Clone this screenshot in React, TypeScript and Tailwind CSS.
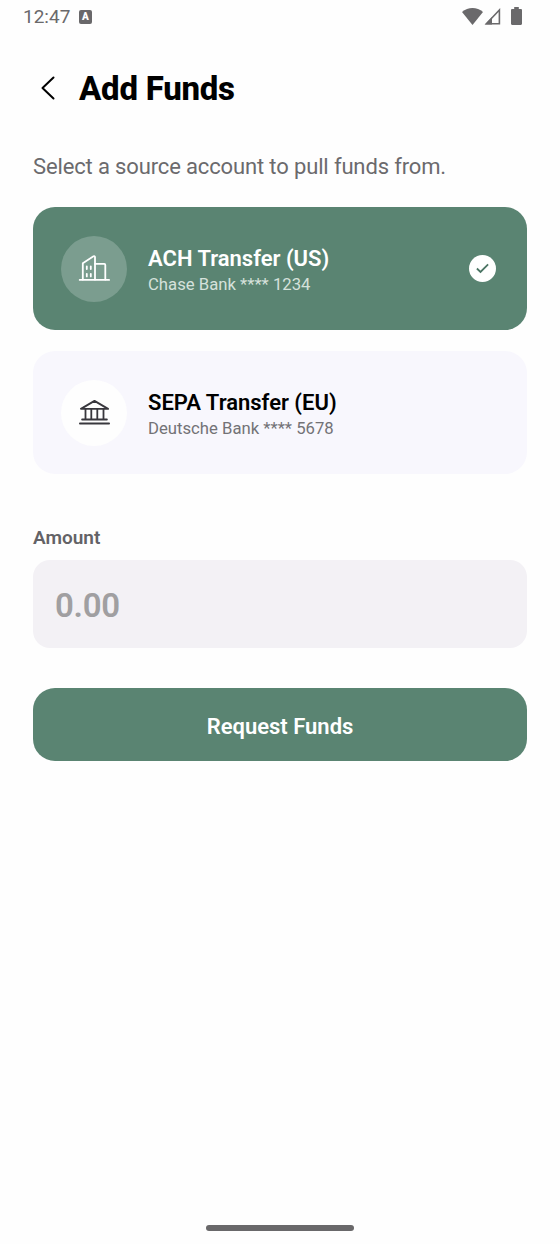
import React from 'react';

interface Account {
  id: string;
  title: string;
  detail: string;
  icon: React.ReactNode;
}

const BuildingIcon: React.FC = () => (
  <svg width="33" height="33" viewBox="0.5 0 33 33" fill="none" stroke="currentColor" strokeWidth="1.8" strokeLinecap="round" strokeLinejoin="round">
    <path d="M2.2 27.9h29.4" />
    <path d="M5.3 27.5V11.2L16 4.3c.8-.5 1.5-.1 1.5.8v22.4" />
    <path d="M17.5 11.9h9.3c.6 0 1 .4 1 1v14.6" />
    <path d="M9.3 14.3v2.8M13.3 14.3v2.8M9.3 21.8v2.6M13.3 21.8v2.6" />
  </svg>
);

const BankIcon: React.FC = () => (
  <svg width="33" height="33" viewBox="0.5 0.5 33 33" fill="none" stroke="currentColor" strokeWidth="1.8" strokeLinecap="round" strokeLinejoin="round">
    <path d="M3.4 13.4h27.2L17 5.4z" />
    <path d="M8 13.4v10.3M13.8 13.4v10.3M19.8 13.4v10.3M26 13.4v10.3" />
    <path d="M4.6 24h24.800M2.4 28h29.200" />
  </svg>
);

const accounts: Account[] = [
  { id: 'ach', title: 'ACH Transfer (US)', detail: 'Chase Bank **** 1234', icon: <BuildingIcon /> },
  { id: 'sepa', title: 'SEPA Transfer (EU)', detail: 'Deutsche Bank **** 5678', icon: <BankIcon /> },
];

const StatusBar: React.FC = () => (
  <div className="flex h-8 items-center justify-between pr-[38px] pl-[23px] text-[#6a696b]">
    <div className="flex items-center pt-px">
      <span className="w-14 text-[19px] leading-8">12:47</span>
      <span className="flex h-[14px] w-[13px] items-center justify-center rounded-[2px] bg-[#69686a] text-[10px] leading-none font-black text-white">
        A
      </span>
    </div>
    <div className="flex items-center">
      <svg width="21" height="17" viewBox="0 0 21 17" fill="currentColor">
        <path d="M0 4C6-1.2 15-1.2 21 4L10.5 17z" />
      </svg>
      <svg className="ml-px" width="17" height="17" viewBox="0 0 17 17">
        <path d="M2.4 15.8 15.4 2v13.8z" fill="none" stroke="currentColor" strokeWidth="1.6" />
        <path d="M1 16.4 8 9v7.4z" fill="currentColor" />
      </svg>
      <svg className="ml-[10px]" width="11" height="18" viewBox="0 0 11 18" fill="currentColor">
        <path d="M3.2 0h4.6v2h2c.7 0 1.2.5 1.2 1.2v13.6c0 .7-.5 1.2-1.2 1.2H1.2C.5 18 0 17.5 0 16.8V3.2C0 2.5.5 2 1.2 2h2z" />
      </svg>
    </div>
  </div>
);

const AccountCard: React.FC<{ account: Account; selected: boolean; onSelect: () => void }> = ({
  account,
  selected,
  onSelect,
}) => (
  <button
    type="button"
    onClick={onSelect}
    className={`flex h-[123px] w-full items-center rounded-[22px] pr-[31px] pl-7 text-left ${
      selected ? 'bg-[#5a8472] text-white' : 'bg-[#f8f7fd] text-black'
    }`}
  >
    <span
      className={`flex size-[66px] shrink-0 items-center justify-center rounded-full ${
        selected ? 'bg-[#7b9d8f] text-white' : 'bg-[#fefefe] text-[#38373d]'
      }`}
    >
      {account.icon}
    </span>
    <span className="ml-[21px] flex grow flex-col pt-[5px]">
      <span className="text-[22px] leading-[26px] font-semibold">{account.title}</span>
      <span className={`text-[16.7px] leading-[25px] ${selected ? 'text-[#d5e1db]' : 'text-[#737276]'}`}>
        {account.detail}
      </span>
    </span>
    {selected && (
      <span className="flex size-[27px] items-center justify-center rounded-full bg-white text-[#4b7564]">
        <svg width="13" height="11" viewBox="0 0 13 11" fill="none" stroke="currentColor" strokeWidth="1.8">
          <path d="M.9 5.5 4.5 9 12.1 1.3" />
        </svg>
      </span>
    )}
  </button>
);

const App: React.FC = () => {
  const [selectedId, setSelectedId] = React.useState('ach');
  const [amount, setAmount] = React.useState('');

  return (
    <div className="flex h-[1244px] w-[560px] flex-col bg-[#fefefe] font-['Roboto',sans-serif]">
      <StatusBar />
      <header className="mt-[33px] flex h-12 items-center pl-[41px]">
        <svg className="mb-[3px]" width="14" height="24" viewBox="0 0 14 24" fill="none" stroke="black" strokeWidth="2" strokeLinecap="round" strokeLinejoin="round">
          <path d="M12.500 1.500 1.500 12 12.500 22.500" />
        </svg>
        <h1 className="ml-6 text-[33px] leading-10 font-extrabold tracking-[-0.25px] text-black">Add Funds</h1>
      </header>

      <main className="flex flex-col px-[33px]">
        <p className="mt-[38px] text-[22px] leading-8 tracking-[-0.14px] text-[#6b6a6d]">
          Select a source account to pull funds from.
        </p>

        <div className="mt-6 flex flex-col gap-[21px]">
          {accounts.map((account) => (
            <AccountCard
              key={account.id}
              account={account}
              selected={account.id === selectedId}
              onSelect={() => setSelectedId(account.id)}
            />
          ))}
        </div>

        <label htmlFor="amount" className="mt-[52px] text-[19px] leading-6 font-semibold text-[#636266]">
          Amount
        </label>
        <input
          id="amount"
          value={amount}
          onChange={(e) => setAmount(e.target.value)}
          placeholder="0.00"
          className="mt-[10px] h-[88px] rounded-[17px] bg-[#f3f1f5] px-[22px] pt-[2px] text-[33px] font-semibold tracking-[-0.3px] text-black outline-none placeholder:text-[#a09fa1]"
        />

        <button type="button" className="mt-10 h-[73px] rounded-[22px] bg-[#5a8472] pt-[3px] text-[22px] font-semibold text-white">
          Request Funds
        </button>
      </main>

      <div className="mt-auto mb-[13px] h-[6px] w-[148px] self-center rounded-full bg-[#69686a]" />
    </div>
  );
};

export default App;
